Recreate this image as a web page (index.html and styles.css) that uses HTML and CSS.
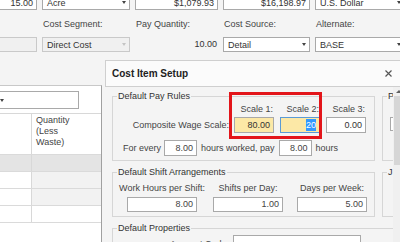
FILE: index.html
```html
<!DOCTYPE html>
<html lang="en">
<head>
  <meta charset="UTF-8">
  <title>Cost Item Setup</title>
  <link rel="stylesheet" href="styles.css">
</head>
<body>
  <div class="form">
    <div class="form-row">
      <div class="field num first">15.00</div>
      <div class="field select">Acre</div>
      <div class="field num">$1,079.93</div>
      <div class="field num">$16,198.97</div>
      <div class="field select">U.S. Dollar</div>
    </div>
    <div class="form-row labels">
      <div></div>
      <div>Cost Segment:</div>
      <div>Pay Quantity:</div>
      <div>Cost Source:</div>
      <div>Alternate:</div>
    </div>
    <div class="form-row">
      <div class="field disabled first"></div>
      <div class="field select disabled">Direct Cost</div>
      <div class="plain">10.00</div>
      <div class="field select">Detail</div>
      <div class="field select">BASE</div>
    </div>
  </div>

  <div class="grid-panel">
    <div class="field select panel-select"></div>
    <div class="grid">
      <div class="grid-row head">
        <div class="cell"></div>
        <div class="cell">Quantity<br>(Less<br>Waste)</div>
      </div>
      <div class="grid-row current">
        <div class="cell"></div>
        <div class="cell"></div>
      </div>
      <div class="grid-row shaded">
        <div class="cell"></div>
        <div class="cell"></div>
      </div>
      <div class="grid-row shaded">
        <div class="cell"></div>
        <div class="cell"></div>
      </div>
      <div class="grid-row">
        <div class="cell"></div>
        <div class="cell"></div>
      </div>
    </div>
  </div>

  <div class="dialog">
    <div class="dialog-title">
      <span>Cost Item Setup</span>
      <svg class="close" width="7" height="7" viewBox="0 0 7 7">
        <path d="M0.5 0.5 L6.5 6.5 M6.5 0.5 L0.5 6.5" stroke="#555" stroke-width="1.2" fill="none"/>
      </svg>
    </div>
    <div class="dialog-body">
      <div class="dialog-content">
        <fieldset class="group">
          <legend>Default Pay Rules</legend>
          <div class="scale-grid">
            <div></div>
            <div class="scale-label">Scale 1:</div>
            <div class="scale-label">Scale 2:</div>
            <div class="scale-label">Scale 3:</div>
            <div class="row-label">Composite Wage Scale:</div>
            <div class="input yellow">80.00</div>
            <div class="input yellow focus"><span class="sel">20</span></div>
            <div class="input">0.00</div>
          </div>
          <div class="every-row">
            <span>For every</span>
            <div class="input short">8.00</div>
            <span>hours worked, pay</span>
            <div class="input short">8.00</div>
            <span>hours</span>
          </div>
        </fieldset>

        <fieldset class="group side">
          <legend>P</legend>
          <div class="input side-input"></div>
        </fieldset>

        <fieldset class="group">
          <legend>Default Shift Arrangements</legend>
          <div class="shift-grid">
            <div>Work Hours per Shift:</div>
            <div>Shifts per Day:</div>
            <div>Days per Week:</div>
            <div class="input wide">8.00</div>
            <div class="input wide">1.00</div>
            <div class="input wide">5.00</div>
          </div>
        </fieldset>

        <fieldset class="group side">
          <legend>J</legend>
        </fieldset>

        <fieldset class="group full">
          <legend>Default Properties</legend>
          <div class="prop-row">
            <div class="row-label">Account Code:</div>
            <div class="input account"></div>
          </div>
        </fieldset>
      </div>
      <div class="scrollbar">
        <div class="scroll-up"></div>
        <div class="thumb"></div>
      </div>
    </div>
  </div>

  <div class="highlight"></div>
</body>
</html>
```

FILE: styles.css
```css
body {
  margin: 0;
  width: 400px;
  height: 242px;
  overflow: hidden;
  position: relative;
  background: #f4f4f4;
  font-family: "Liberation Sans", Arial, sans-serif;
  font-size: 9px;
  color: #333;
}

/* top form */
.form {
  margin-top: -5px;
}

.form-row {
  display: grid;
  grid-template-columns: 37px 88px 83px 87px 90px;
  column-gap: 5px;
}

.field {
  height: 15px;
  box-sizing: border-box;
  border: 1px solid #a9a9a9;
  background: #fff;
  display: flex;
  align-items: center;
  padding: 0 3px;
  white-space: nowrap;
}

.field.first {
  margin-left: -10px;
}

.num {
  justify-content: flex-end;
}

.select {
  justify-content: space-between;
  padding-left: 4px;
}

.select::after {
  content: "";
  border-left: 2.5px solid transparent;
  border-right: 2.5px solid transparent;
  border-top: 3px solid #444;
}

.disabled {
  background: #f0f0f0;
  border-color: #c9c9c9;
}

.disabled.select::after {
  border-top-color: #c4c4c4;
}

.labels {
  height: 27px;
  box-sizing: border-box;
  padding: 9px 0 0 1px;
  line-height: 11px;
  color: #444;
}

.plain {
  height: 15px;
  line-height: 15px;
  text-align: right;
  padding-right: 1px;
}

/* left grid panel */
.grid-panel {
  margin-top: 33px;
  width: 102px;
  height: 160px;
  box-sizing: border-box;
  background: #fff;
  border-top: 1px solid #c8c8c8;
  border-right: 1px solid #a0a0a0;
  overflow: hidden;
}

.panel-select {
  margin: 5px 0 0 -5px;
  width: 84px;
  height: 18px;
  padding-right: 5px;
}

.grid {
  margin-top: 4px;
  border-top: 1px solid #d8d8d8;
}

.grid-row {
  display: grid;
  grid-template-columns: 32px 1fr;
  height: 17px;
  box-sizing: border-box;
  border-bottom: 1px solid #dadada;
}

.grid-row .cell:first-child {
  border-right: 1px solid #d8d8d8;
}

.grid-row.head {
  height: 41px;
}

.head .cell {
  padding: 1px 0 0 4px;
  line-height: 11px;
  color: #444;
}

.current .cell {
  background: #e4e4e4;
}

.shaded .cell:last-child {
  background: #f2f2f2;
}

/* dialog */
.dialog {
  position: absolute;
  left: 105px;
  top: 60px;
  width: 310px;
  bottom: 0;
  background: #f4f4f4;
}

.dialog-title {
  height: 27px;
  box-sizing: border-box;
  border: 1px solid #cfcfcf;
  background: #fbfbfb;
  display: flex;
  align-items: center;
  justify-content: space-between;
  padding: 0 22px 0 6px;
  font-size: 10px;
  font-weight: bold;
  color: #222;
}

.dialog-body {
  display: flex;
  height: calc(100% - 27px);
}

.dialog-content {
  width: 288px;
  box-sizing: border-box;
  padding: 4px 0 0 7px;
  overflow: hidden;
  display: grid;
  grid-template-columns: 263px 100px;
  grid-template-rows: auto auto auto;
  column-gap: 7px;
  row-gap: 6px;
  align-content: start;
}

.group {
  margin: 0;
  min-width: 0;
  border: 1px solid #d6d6d6;
  padding: 0 5px 4px;
}

.group legend {
  padding: 0 1px;
  margin-left: -1px;
  line-height: 11px;
  color: #333;
}

.group.full {
  grid-column: 1 / -1;
  width: 300px;
  padding-bottom: 20px;
}

.input {
  height: 16px;
  box-sizing: border-box;
  border: 1px solid #a9a9a9;
  background: #fff;
  text-align: right;
  padding-right: 3px;
  line-height: 14px;
}

.yellow {
  background: #fce8a6;
}

.focus {
  border-color: #5b9bd5;
}

.sel {
  background: #3399ff;
  color: #fff;
  padding: 1px 0;
}

.scale-grid {
  display: grid;
  grid-template-columns: 110px 40px 40px 40px;
  column-gap: 6px;
  row-gap: 2px;
  margin-top: 2px;
}

.scale-grid > div:first-child {
  margin-right: -1px;
}

.scale-label {
  text-align: right;
  line-height: 11px;
  padding-right: 1px;
  white-space: nowrap;
  color: #444;
}

.row-label {
  text-align: right;
  align-self: center;
  margin-right: -1px;
  color: #444;
}

.every-row {
  display: flex;
  align-items: center;
  margin-top: 7px;
  padding-left: 5px;
  color: #444;
}

.input.short {
  width: 33px;
  margin: 0 4px 0 3px;
}

.input.short + span + .input.short {
  margin-left: 4px;
}

.shift-grid {
  display: grid;
  grid-template-columns: 88px 84px 84px;
  justify-items: center;
  row-gap: 3px;
  margin: 5px -6px 0 0;
  line-height: 11px;
  color: #444;
  white-space: nowrap;
}

.input.wide {
  width: 70px;
  height: 15px;
  line-height: 13px;
  justify-self: center;
}

.side-input {
  width: 50px;
  height: 14px;
  margin: 15px 0 0 2px;
}

.prop-row {
  display: grid;
  grid-template-columns: 110px 128px;
  column-gap: 5px;
  margin-top: 1px;
}

.input.account {
  height: 18px;
}

/* scrollbar */
.scrollbar {
  width: 12px;
  padding-top: 3px;
  background: #f0f0f0;
}

.scroll-up {
  width: 0;
  margin: 0 auto;
  border-left: 3px solid transparent;
  border-right: 3px solid transparent;
  border-bottom: 3px solid #606060;
}

.thumb {
  margin: 3px 1px 0;
  height: 69px;
  background: #d6d6d6;
}

/* annotation */
.highlight {
  position: absolute;
  left: 229px;
  top: 92px;
  width: 93px;
  height: 47px;
  box-sizing: border-box;
  border: 3px solid #e3151a;
}
```
